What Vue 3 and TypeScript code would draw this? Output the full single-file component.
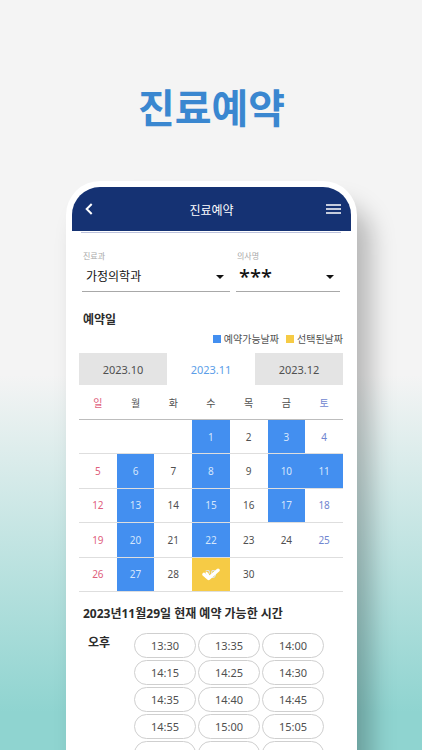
<script setup lang="ts">
import { ref } from 'vue'

type DayState = 'open' | 'closed'
interface Day {
  date: number
  state: DayState
}

const weekdays = ['일', '월', '화', '수', '목', '금', '토']
const months = ['2023.10', '2023.11', '2023.12']
const openDates = [1, 3, 6, 8, 10, 11, 13, 15, 17, 20, 22, 27, 29]
const times = [
  '13:30', '13:35', '14:00',
  '14:15', '14:25', '14:30',
  '14:35', '14:40', '14:45',
  '14:55', '15:00', '15:05',
]
const pendingSlots = 3

const department = ref('가정의학과')
const doctor = ref('***')
const activeMonth = ref('2023.11')
const selectedDate = ref(29)

// November 2023 starts on a Wednesday and has 30 days.
const firstWeekday = 3
const weeks: (Day | null)[][] = Array.from({ length: 5 }, (_, week) =>
  Array.from({ length: 7 }, (_, weekday) => {
    const date = week * 7 + weekday - firstWeekday + 1
    if (date < 1 || date > 30) return null
    return { date, state: openDates.includes(date) ? 'open' : 'closed' } as Day
  }),
)

function pick(day: Day) {
  if (day.state === 'open') selectedDate.value = day.date
}
</script>

<template>
  <main class="page">
    <h1 class="headline">진료예약</h1>

    <section class="phone">
      <header class="bar">
        <button class="icon-button" type="button" aria-label="뒤로">
          <svg width="8" height="12" viewBox="0 0 8 12" fill="none" stroke="#fff" stroke-width="2">
            <path d="M6.7 1 1.7 6l5 5" />
          </svg>
        </button>
        <h2 class="bar-title">진료예약</h2>
        <button class="icon-button end" type="button" aria-label="메뉴">
          <svg width="15" height="10" viewBox="0 0 15 10" fill="none" stroke="#fff" stroke-width="1.7">
            <path d="M0 1h15M0 5h15M0 9h15" />
          </svg>
        </button>
      </header>

      <div class="content">
        <div class="fields">
          <div class="field wide">
            <label for="department">진료과</label>
            <div class="select-box">
              <select id="department" v-model="department">
                <option>가정의학과</option>
              </select>
              <svg class="caret" width="8" height="4" viewBox="0 0 8 4"><path d="M0 0h8L4 4z" fill="#111" /></svg>
            </div>
          </div>
          <div class="field">
            <label for="doctor">의사명</label>
            <div class="select-box">
              <select id="doctor" v-model="doctor" class="masked">
                <option>***</option>
              </select>
              <svg class="caret" width="8" height="4" viewBox="0 0 8 4"><path d="M0 0h8L4 4z" fill="#111" /></svg>
            </div>
          </div>
        </div>

        <h3 class="section-title">예약일</h3>
        <ul class="legend">
          <li><i class="swatch open"></i>예약가능날짜</li>
          <li><i class="swatch selected"></i>선택된날짜</li>
        </ul>

        <nav class="months">
          <button
            v-for="month in months"
            :key="month"
            type="button"
            :class="{ active: month === activeMonth }"
            @click="activeMonth = month"
          >{{ month }}</button>
        </nav>

        <table class="calendar">
          <thead>
            <tr>
              <th v-for="name in weekdays" :key="name" scope="col">{{ name }}</th>
            </tr>
          </thead>
          <tbody>
            <tr v-for="(week, w) in weeks" :key="w">
              <td
                v-for="(day, d) in week"
                :key="d"
                :class="day && { open: day.state === 'open', selected: day.date === selectedDate }"
              >
                <button v-if="day" type="button" :disabled="day.state === 'closed'" @click="pick(day)">
                  {{ day.date }}
                  <svg v-if="day.date === selectedDate" class="check" width="18" height="14" viewBox="0 0 18 14" fill="none" stroke="#fff" stroke-linecap="round" stroke-linejoin="round">
                    <path d="M2 7.4 6.6 11.4 16 3.2" stroke-width="3.4" />
                    <path d="M4.6 5.8 7 9.4" stroke-width="2" />
                  </svg>
                </button>
              </td>
            </tr>
          </tbody>
        </table>

        <h3 class="section-title times-title">2023년11월29일 현재 예약 가능한 시간</h3>
        <div class="times">
          <h4>오후</h4>
          <div class="slots">
            <button v-for="time in times" :key="time" class="slot" type="button">{{ time }}</button>
            <span v-for="n in pendingSlots" :key="n" class="slot" aria-hidden="true"></span>
          </div>
        </div>
      </div>
    </section>
  </main>
</template>

<style>
body {
  margin: 0;
}
</style>

<style scoped>
.page {
  box-sizing: border-box;
  height: 100vh;
  overflow: hidden;
  padding: 78px 65px 0 66px;
  font-family: "Noto Sans", "Noto Sans CJK KR", sans-serif;
  font-size: 11px;
  color: #505050;
  background: linear-gradient(#f4f4f4 50%, #8fd4d0 95%);
}

h1, h2, h3, h4, ul {
  margin: 0;
  padding: 0;
}

button, select {
  margin: 0;
  padding: 0;
  border: 0;
  font: inherit;
  color: inherit;
  background: none;
}

.headline {
  margin-bottom: 43px;
  font-size: 40px;
  font-weight: 700;
  line-height: 60px;
  text-align: center;
  color: #3a87d0;
}

.phone {
  padding: 6px 6px 0;
  min-height: 600px;
  border-radius: 34px 34px 0 0;
  background: #fff;
  box-shadow: 14px 24px 24px rgba(0, 0, 0, 0.25);
}

.bar {
  display: grid;
  grid-template-columns: 32px 1fr 32px;
  align-items: center;
  height: 44px;
  padding: 0 10px;
  border-radius: 28px 28px 0 0;
  color: #fff;
  background: #153273;
}

.icon-button {
  display: flex;
  align-items: center;
  height: 32px;
  padding-left: 3px;
}

.icon-button.end {
  justify-content: flex-end;
}

.bar-title {
  padding-top: 3px;
  font-size: 12px;
  font-weight: 400;
  line-height: 20px;
  text-align: center;
}

.content {
  padding: 0 8px 0 7px;
}

.fields {
  display: flex;
  gap: 6px;
  margin: 1px 2px 0;
  padding: 17px 1px 0;
  border-top: 1px solid #bcc2dc;
}

.field {
  flex: 104;
}

.field.wide {
  flex: 148;
}

.field label {
  display: block;
  padding-left: 1px;
  font-size: 8px;
  line-height: 12px;
  color: #a8a8a8;
}

.select-box {
  display: grid;
  align-items: center;
  height: 29px;
  border-bottom: 1px solid #a8a8a8;
}

.select-box > * {
  grid-area: 1 / 1;
}

select {
  width: 100%;
  height: 28px;
  padding-left: 4px;
  appearance: none;
  font-size: 12px;
  color: #111;
}

select.masked {
  padding-left: 3px;
  font-size: 20px;
  font-weight: 500;
}

.caret {
  justify-self: end;
  margin-right: 6px;
  pointer-events: none;
}

.section-title {
  padding-left: 4px;
  font-size: 12px;
  font-weight: 700;
  line-height: 20px;
  color: #2b2b2b;
}

.fields + .section-title {
  margin-top: 18px;
}

.legend {
  display: flex;
  justify-content: flex-end;
  gap: 7px;
  list-style: none;
  font-size: 10px;
  line-height: 18px;
}

.legend li {
  display: flex;
  align-items: center;
  gap: 3px;
}

.swatch {
  width: 8px;
  height: 8px;
}

.swatch.open {
  background: #438ff0;
}

.swatch.selected {
  background: #f6cb45;
}

.months {
  display: grid;
  grid-template-columns: repeat(3, 1fr);
  margin-top: 5px;
}

.months button {
  height: 32px;
  background: #e4e4e4;
}

.months button.active {
  color: #5c9ee8;
  background: none;
}

.calendar {
  width: 100%;
  height: 207px;
  table-layout: fixed;
  border-collapse: separate;
  border-spacing: 0;
}

th {
  height: 34px;
  padding: 0;
  border-bottom: 1px solid #bdbdbd;
  font-size: 10px;
  font-weight: 400;
}

td {
  height: 33px;
  padding: 0;
  border-bottom: 1px solid #dedede;
  font-size: 10px;
}

th:first-child, td:first-child {
  color: #e0607c;
}

th:last-child, td:last-child {
  color: #6f86d0;
}

td button {
  position: relative;
  display: block;
  width: 100%;
  height: 33px;
}

td.open, td.open:last-child {
  color: #d5e6fc;
  background: #438ff0;
  background-clip: padding-box;
}

td.selected {
  background-color: #f6cb45;
}

.check {
  position: absolute;
  inset: 0;
  margin: auto;
}

.times-title {
  margin-top: 12px;
}

.times {
  display: flex;
  padding: 9px 19px 0 9px;
}

.times h4 {
  width: 46px;
  font-size: 12px;
  font-weight: 700;
  line-height: 20px;
  color: #2b2b2b;
}

.slots {
  flex: 1;
  display: grid;
  grid-template-columns: repeat(3, 1fr);
  gap: 2px;
}

.slot {
  box-sizing: border-box;
  height: 25px;
  border: 1px solid #cfcfcf;
  border-radius: 13px;
}
</style>
